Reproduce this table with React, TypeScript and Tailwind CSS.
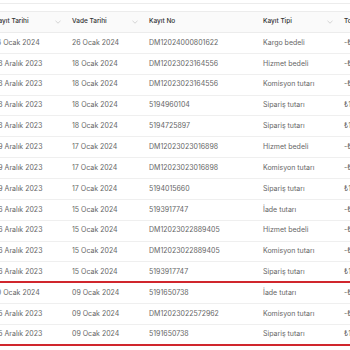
import React from 'react'

type Row = {
  kayitTarihi: string
  vadeTarihi: string
  kayitNo: string
  kayitTipi: string
  tutar: string
  groupEnd?: boolean
}

const rows: Row[] = [
  { kayitTarihi: '16 Ocak 2024', vadeTarihi: '26 Ocak 2024', kayitNo: 'DM12024000801622', kayitTipi: 'Kargo bedeli', tutar: '-₺29,99' },
  { kayitTarihi: '28 Aralık 2023', vadeTarihi: '18 Ocak 2024', kayitNo: 'DM12023023164556', kayitTipi: 'Hizmet bedeli', tutar: '-₺6,99' },
  { kayitTarihi: '28 Aralık 2023', vadeTarihi: '18 Ocak 2024', kayitNo: 'DM12023023164556', kayitTipi: 'Komisyon tutarı', tutar: '-₺45,20' },
  { kayitTarihi: '28 Aralık 2023', vadeTarihi: '18 Ocak 2024', kayitNo: '5194960104', kayitTipi: 'Sipariş tutarı', tutar: '₺189,90' },
  { kayitTarihi: '28 Aralık 2023', vadeTarihi: '18 Ocak 2024', kayitNo: '5194725897', kayitTipi: 'Sipariş tutarı', tutar: '₺149,90' },
  { kayitTarihi: '29 Aralık 2023', vadeTarihi: '17 Ocak 2024', kayitNo: 'DM12023023016898', kayitTipi: 'Hizmet bedeli', tutar: '-₺6,99' },
  { kayitTarihi: '29 Aralık 2023', vadeTarihi: '17 Ocak 2024', kayitNo: 'DM12023023016898', kayitTipi: 'Komisyon tutarı', tutar: '-₺32,10' },
  { kayitTarihi: '29 Aralık 2023', vadeTarihi: '17 Ocak 2024', kayitNo: '5194015660', kayitTipi: 'Sipariş tutarı', tutar: '₺129,90' },
  { kayitTarihi: '26 Aralık 2023', vadeTarihi: '15 Ocak 2024', kayitNo: '5193917747', kayitTipi: 'İade tutarı', tutar: '-₺149,90' },
  { kayitTarihi: '26 Aralık 2023', vadeTarihi: '15 Ocak 2024', kayitNo: 'DM12023022889405', kayitTipi: 'Hizmet bedeli', tutar: '-₺6,99' },
  { kayitTarihi: '26 Aralık 2023', vadeTarihi: '15 Ocak 2024', kayitNo: 'DM12023022889405', kayitTipi: 'Komisyon tutarı', tutar: '-₺28,40' },
  { kayitTarihi: '26 Aralık 2023', vadeTarihi: '15 Ocak 2024', kayitNo: '5193917747', kayitTipi: 'Sipariş tutarı', tutar: '₺149,90', groupEnd: true },
  { kayitTarihi: '10 Ocak 2024', vadeTarihi: '09 Ocak 2024', kayitNo: '5191650738', kayitTipi: 'İade tutarı', tutar: '-₺119,90' },
  { kayitTarihi: '25 Aralık 2023', vadeTarihi: '09 Ocak 2024', kayitNo: 'DM12023022572962', kayitTipi: 'Komisyon tutarı', tutar: '-₺22,70' },
  { kayitTarihi: '25 Aralık 2023', vadeTarihi: '09 Ocak 2024', kayitNo: '5191650738', kayitTipi: 'Sipariş tutarı', tutar: '₺119,90', groupEnd: true },
]

function Chevron() {
  return (
    <svg width="6" height="4" viewBox="0 0 6 4" className="shrink-0">
      <path d="M0.5 0.8 L3 3.2 L5.5 0.8" fill="none" stroke="#c4c4c4" strokeWidth="0.7" />
    </svg>
  )
}

function HeaderCell({ label, sortable, width }: { label: string; sortable?: boolean; width: string }) {
  return (
    <div className={`flex items-center justify-between pl-2 pr-[3px] shrink-0 ${width}`}>
      <span>{label}</span>
      {sortable && <Chevron />}
    </div>
  )
}

export default function App() {
  return (
    <div
      className="w-[350px] h-[350px] overflow-hidden bg-white"
      style={{ fontFamily: 'Inter, "Noto Sans", sans-serif' }}
    >
      {/* Filtre alanının alt çizgisi */}
      <div className="h-[4px] border-b border-[#ececec]" />

      <div className="mt-[7px] ml-[-14px] w-[440px]">
        {/* Başlık */}
        <div className="flex h-[22px] items-center bg-[#fafafa] border-t border-b border-[#ececec] text-[6.5px] font-medium text-[#333]">
          <HeaderCell label="Kayıt Tarihi" sortable width="w-[78px]" />
          <HeaderCell label="Vade Tarihi" sortable width="w-[77px]" />
          <HeaderCell label="Kayıt No" width="w-[114px]" />
          <HeaderCell label="Kayıt Tipi" sortable width="w-[81px]" />
          <HeaderCell label="Toplam Tutar" width="w-[90px]" />
        </div>

        {/* Satırlar */}
        {rows.map((row, i) => (
          <div
            key={i}
            className={`flex items-center h-[20.86px] text-[7px] text-[#666] ${
              row.groupEnd ? 'border-b-2 border-[#d0262d]' : 'border-b border-[#efefef]'
            }`}
          >
            <div className="w-[78px] pl-2 shrink-0 whitespace-nowrap">{row.kayitTarihi}</div>
            <div className="w-[77px] pl-2 shrink-0 whitespace-nowrap">{row.vadeTarihi}</div>
            <div className="w-[114px] pl-2 shrink-0 whitespace-nowrap">{row.kayitNo}</div>
            <div className="w-[81px] pl-2 shrink-0 whitespace-nowrap">{row.kayitTipi}</div>
            <div className="w-[90px] pl-2 shrink-0 whitespace-nowrap">{row.tutar}</div>
          </div>
        ))}
      </div>
    </div>
  )
}
